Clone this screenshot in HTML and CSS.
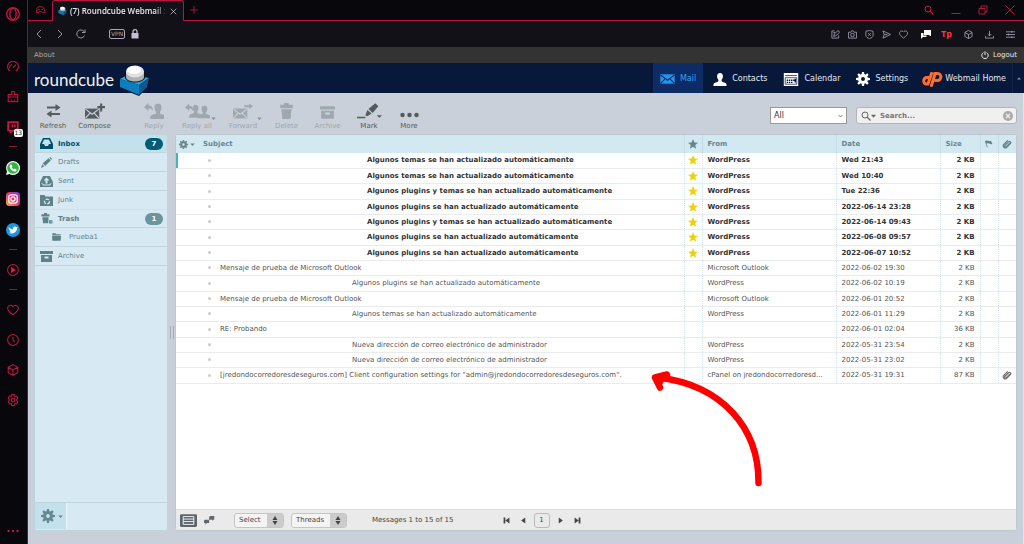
FILE: index.html
```
<!DOCTYPE html>
<html lang="en">
<head>
<meta charset="utf-8">
<title>Roundcube Webmail :: Inbox</title>
<link rel="stylesheet" href="styles.css">
</head>
<body>
<svg class="defs" aria-hidden="true">
  <symbol id="star" viewBox="0 0 20 20"><path fill="currentColor" d="M10 0l2.800 6.800 7.200.6-5.500 4.800 1.700 7.300L10 15.600l-6.200 3.900 1.700-7.300L0 7.400l7.200-.6z"/></symbol>
  <symbol id="gear" viewBox="0 0 20 20"><g fill="currentColor"><path fill-rule="evenodd" d="M10 3a7 7 0 1 0 0 14 7 7 0 0 0 0-14zm0 4.200a2.800 2.800 0 1 1 0 5.600 2.800 2.800 0 0 1 0-5.600z"/><path d="M8 4L8.500 0h3L12 4zM8 16l.5 4h3l.5-4zM4 8L0 8.500v3l4 .5zM16 8l4 .5v3l-4 .5zM4.300 7.200L1.900 4 4 1.900l3.200 2.400zM15.700 7.200L18.100 4 16 1.900l-3.200 2.400zM4.300 12.800L1.900 16 4 18.100l3.200-2.400zM15.700 12.800l2.400 3.200-2.100 2.100-3.200-2.400z"/></g></symbol>
  <symbol id="caret" viewBox="0 0 6 4"><path fill="currentColor" d="M0 .5h6L3 4z"/></symbol>
  <symbol id="clip" viewBox="0 0 20 20"><path fill="none" stroke="currentColor" stroke-width="2.400" stroke-linecap="round" d="M16 8l-7.500 7.500c-2 2-4.500-.5-2.800-2.500L13 5.500c2.500-2.500 6 1 3.700 3.500l-7.200 7.500C5.500 20.300-.2 15 3.500 11L11 3.300"/></symbol>
  <symbol id="person" viewBox="0 0 20 20"><path fill="currentColor" d="M10 0c3 0 4.500 2 4.500 5 0 2.500-.8 4-2 5.500v2c1 1.500 7.500 2 7.500 5V20H0v-2.500c0-3 6.500-3.500 7.500-5v-2c-1.200-1.500-2-3-2-5.500 0-3 1.500-5 4.500-5z"/></symbol>
  <symbol id="archive" viewBox="0 0 26 22"><path fill="currentColor" fill-rule="evenodd" d="M0 0h26v6H0zM2 8h22v14H2zm7 3v4h8v-4z"/></symbol>
  <symbol id="envelope" viewBox="0 0 24 16"><rect width="24" height="16" fill="currentColor"/><path fill="none" stroke-width="1.800" d="M1 1.500l11 8.500 11-8.500M1 15l7.500-7.500M23 15l-7.500-7.500"/></symbol>
  <symbol id="cube" viewBox="0 0 20 20"><path d="M10 1l8 4.500v9L10 19l-8-4.500v-9zM2 5.500l8 4.500 8-4.500M10 10v9"/></symbol>
  <symbol id="heart" viewBox="0 0 20 20"><path d="M10 18C5 14 1 11 1 7c0-5 6-6.500 9-2.500C13 .5 19 2 19 7c0 4-4 7-9 11z"/></symbol>
  <symbol id="lens" viewBox="0 0 20 20"><circle cx="8" cy="8" r="6" fill="none" stroke="currentColor" stroke-width="2"/><path d="M12.500 12.500L19 19" stroke="currentColor" stroke-width="2.500"/></symbol>
  <symbol id="logo" viewBox="0 0 31 31"><path fill="#101418" d="M0 13l9-5 22 4-2 10-9 9L0 23z"/><path fill="#2fa4dc" d="M1 14l9-5 20 4-10 7z"/><path fill="#0b7fc0" d="M1 14l19 6v10L1 22z"/><path fill="#075a92" d="M20 20l10-7-2 9-8 8z"/><path fill="#101418" d="M6 6h20v7c-3 6-17 6-20 0z"/><path fill="#aeb2b4" d="M7 6h18v6c0 6-18 6-18 0z"/><ellipse cx="16" cy="6.500" rx="9" ry="6" fill="#dfe1e2"/><ellipse cx="15" cy="5" rx="7" ry="4" fill="#fff"/></symbol>
</svg>

<div class="browser">
  <aside class="dock">
    <button class="dock-item opera" aria-label="Opera menu"><svg viewBox="0 0 20 20"><circle cx="10" cy="10" r="9"/><ellipse cx="10" cy="10" rx="4.500" ry="8"/></svg></button>
    <button class="dock-item" aria-label="GX Control"><svg viewBox="0 0 20 20"><path d="M5 17a9 9 0 1 1 10 0M10 11l5-5M4 12a6 6 0 0 1 4-6"/></svg></button>
    <button class="dock-item" aria-label="GX Cleaner"><svg viewBox="0 0 20 20"><path d="M2 10h16v8H2zM2 10V6h6V1h4v5h6v4M8 14v4M12 14v4"/></svg></button>
    <button class="dock-item twitch" aria-label="Twitch"><svg viewBox="0 0 20 20"><path stroke-width="3" d="M2 2h16v10l-4 4H9l-3 3v-3H2zM9 6v5M13 6v5"/></svg><span class="count">13</span></button>
    <span class="dash"></span>
    <button class="dock-item app" aria-label="WhatsApp"><svg viewBox="0 0 20 20"><path fill="#eee" stroke="none" d="M10 0a10 10 0 1 1-5 18.600L0 20l1.400-5A10 10 0 0 1 10 0z"/><circle cx="10" cy="10" r="8.300" fill="#2bb741" stroke="none"/><path fill="#fff" stroke="none" d="M6.500 5h1.500l1.200 2.800-1 1.200c.8 1.500 1.800 2.300 3.200 3l1.200-1.200 2.600 1.200c0 4-4 3.500-7 1.200C5.500 11 4 7 6.500 5z"/></svg></button>
    <button class="dock-item app" aria-label="Instagram"><svg viewBox="0 0 20 20"><defs><linearGradient id="insta" x1="0" y1="1" x2="1" y2="0"><stop offset="0" stop-color="#fdb541"/><stop offset=".5" stop-color="#e2316e"/><stop offset="1" stop-color="#6d42d4"/></linearGradient></defs><rect width="20" height="20" rx="5" fill="url(#insta)" stroke="none"/><g stroke="#fff" stroke-width="1.800"><rect x="4" y="4" width="12" height="12" rx="3"/><circle cx="10" cy="10" r="3"/></g></svg></button>
    <button class="dock-item app" aria-label="Twitter"><svg viewBox="0 0 20 20"><circle cx="10" cy="10" r="10" fill="#1d96e0" stroke="none"/><path fill="#fff" stroke="none" d="M4 6c2 2 4 3 6 3-.5-4 3-5 5-3l2-.7-1.300 2C16 13 10 17 4 14c2 0 3 0 4-1-2 0-2.500-1-3-2h1.500C4.500 10 4 9 4 8l1 .3C4 7.500 3.500 7 4 6z"/></svg></button>
    <span class="dash"></span>
    <button class="dock-item" aria-label="Player"><svg viewBox="0 0 20 20"><circle cx="10" cy="10" r="9"/><path fill="#fa1e4e" d="M7.500 6v8l6-4z"/></svg></button>
    <span class="dash"></span>
    <button class="dock-item" aria-label="Favourites"><svg><use href="#heart"/></svg></button>
    <button class="dock-item" aria-label="History"><svg viewBox="0 0 20 20"><circle cx="10" cy="10" r="9"/><path d="M10 5v5l3 3"/></svg></button>
    <button class="dock-item" aria-label="Extensions"><svg><use href="#cube"/></svg></button>
    <button class="dock-item" aria-label="Settings"><svg viewBox="0 0 20 20"><path d="M8 1h4l1 3 3-.5 2 3.500-2 3 2 3-2 3.500-3-.5-1 3H8l-1-3-3 .5L2 13l2-3-2-3 2-3.500L7 4z"/><circle cx="10" cy="10" r="3"/></svg></button>
    <button class="dock-item last" aria-label="More"><svg viewBox="0 0 20 20"><g fill="#c8173f" stroke="none"><circle cx="2.500" cy="10" r="1.900"/><circle cx="10" cy="10" r="1.900"/><circle cx="17.500" cy="10" r="1.900"/></g></svg></button>
  </aside>

  <div class="window">
    <header class="tabs">
      <button class="corner" aria-label="GX Corner"><svg viewBox="0 0 20 16"><path d="M5 1h10l4 6v7h-5l-2-3H8l-2 3H1V7zM4 7h4M12 7h4"/></svg></button>
      <div class="tab"><svg class="tab-logo"><use href="#logo"/></svg><span class="tab-title">(7) Roundcube Webmail :: I</span><button class="tab-close" aria-label="Close tab"><svg viewBox="0 0 10 10"><path d="M1 1l8 8M9 1L1 9"/></svg></button></div>
      <div class="tab-rest"><button class="new-tab" aria-label="New tab"><svg viewBox="0 0 10 10"><path d="M5 0v10M0 5h10"/></svg></button>
        <div class="win-controls">
          <button aria-label="Search tabs"><svg><use href="#lens"/></svg></button>
          <button aria-label="Minimize"><svg viewBox="0 0 20 20"><path d="M1 17h18"/></svg></button>
          <button aria-label="Restore"><svg viewBox="0 0 20 20"><path d="M2 7h12v11H2zM6 6V2h12v12h-4"/></svg></button>
          <button aria-label="Close"><svg viewBox="0 0 20 20"><path d="M1 1l18 18M19 1L1 19"/></svg></button>
        </div>
      </div>
    </header>

    <div class="address">
      <button aria-label="Back"><svg viewBox="0 0 20 20"><path d="M14 2l-8 8 8 8"/></svg></button>
      <button aria-label="Forward"><svg viewBox="0 0 20 20"><path d="M6 2l8 8-8 8"/></svg></button>
      <button aria-label="Reload"><svg viewBox="0 0 20 20"><path d="M17 13a8 8 0 1 1-1-8l2 2M18 1v6h-6"/></svg></button>
      <span class="vpn">VPN</span>
      <svg class="lock" viewBox="0 0 16 20"><path fill="#c6bfd6" d="M1 8h14v11H1z"/><path fill="none" stroke="#c6bfd6" stroke-width="2.500" d="M4 9V5c0-5 8-5 8 0v4"/></svg>
      <div class="address-tools">
        <button aria-label="Edit"><svg viewBox="0 0 20 20"><path d="M8 2H2v16h15v-6M6 14l2-6 8-7 3 4-8 8zM5 6h4"/></svg></button>
        <button aria-label="Snapshot"><svg viewBox="0 0 20 20"><path d="M1 5h5l2-3h4l2 3h5v13H1z"/><circle cx="10" cy="11" r="4"/></svg></button>
        <button aria-label="Blocker"><svg viewBox="0 0 20 20"><path d="M10 1l8 2v9c0 4-4 6-8 7-4-1-8-3-8-7V3zM7 7l6 6M13 7l-6 6"/></svg></button>
        <button aria-label="Send"><svg viewBox="0 0 20 20"><path d="M2 2l17 8-17 8 3-8zM5 10h7"/></svg></button>
        <button aria-label="Bookmark"><svg><use href="#heart"/></svg></button>
        <button class="chat" aria-label="Chat"><svg viewBox="0 0 20 20"><path fill="#fff" stroke="none" d="M6 2h14v12h-3v-2H6zM0 8h5v5h6v3H4l-3 3H0z"/></svg></button>
        <button class="tp" aria-label="Tp extension">Tp</button>
        <button aria-label="Extensions"><svg><use href="#cube"/></svg></button>
        <button aria-label="Downloads"><svg viewBox="0 0 20 20"><path d="M10 2v11M6 9l4 4 4-4M1 13v5h18v-5"/></svg></button>
        <button aria-label="Easy setup"><svg viewBox="0 0 20 20"><path d="M0 4h20M0 10h20M0 16h20M13 2v4M6 8v4M13 14v4"/></svg></button>
      </div>
    </div>

    <div class="topline"><a href="#">About</a><a class="logout" href="#"><svg viewBox="0 0 20 20"><path d="M6 4a8 8 0 1 0 8 0M10 1v9"/></svg>Logout</a></div>

    <header class="masthead">
      <a class="brand" href="#" aria-label="Roundcube"><span>roundcube</span><svg><use href="#logo"/></svg></a>
      <nav class="tasks">
        <a class="active" href="#"><svg class="mail-ic"><use href="#envelope"/></svg>Mail</a>
        <a href="#"><svg><use href="#person"/></svg>Contacts</a>
        <a href="#"><svg class="cal-ic" viewBox="0 0 20 18"><path fill="#fff" d="M0 0h20v18H0z"/><path fill="none" stroke="#07183a" d="M2 3.500h16M2 6.500h16v9H2z"/><path fill="#07183a" d="M4 9h2v2H4zM7 9h2v2H7zM10 9h2v2h-2zM13 9h2v2h-2zM4 12h2v2H4zM7 12h2v2H7zM10 12h2v2h-2zM15 8h2v5h-2z"/></svg>Calendar</a>
        <a href="#"><svg class="set-ic"><use href="#gear"/></svg>Settings</a>
        <a class="home" href="#"><svg class="cp-ic" viewBox="0 0 42 30"><path fill="none" stroke="#ff6c2c" stroke-width="6" stroke-linecap="round" stroke-linejoin="round" d="M15 11h-5c-8 0-9 13-1 13h3l7-21M25 3h6c10 0 8 14 0 14h-4M25 7l-6 20"/></svg>Webmail Home</a>
      </nav>
      <button class="fold" aria-label="Collapse header"><svg><use href="#caret"/></svg></button>
    </header>

    <main class="mail">
      <div class="toolbar">
        <button class="tool"><svg viewBox="0 0 30 28"><path fill="currentColor" d="M2 5h17V0l10 7-10 7V9H2zM28 18H11v-5L1 20l10 7v-5h17z"/></svg><span>Refresh</span></button>
        <button class="tool compose"><svg viewBox="0 0 42 32"><path fill="currentColor" d="M0 11h30v21H0z"/><path fill="none" stroke="#c9d0d9" stroke-width="2.500" d="M1 12l14 11 14-11M1 31l10-11M29 31L19 20"/><path stroke="currentColor" stroke-width="4.500" d="M34 0v17M26 8h16"/></svg><span>Compose</span></button>
        <button class="tool off reply" disabled><svg viewBox="0 0 40 32"><path fill="currentColor" d="M0 8l9-8v5c7 0 9 4 8 12-1-5-3-6-8-6v5z"/><use href="#person" x="10" y="1" width="36" height="31"/></svg><span>Reply</span></button>
        <button class="tool off split" disabled><svg class="wide" viewBox="0 0 54 32"><path fill="currentColor" d="M0 8l9-8v5c7 0 9 4 8 12-1-5-3-6-8-6v5z"/><use href="#person" x="9" y="1" width="28" height="31"/><use href="#person" x="28" y="4" width="28" height="28"/></svg><span>Reply all</span><svg class="car"><use href="#caret"/></svg></button>
        <button class="tool off split" disabled><svg class="fwd" viewBox="0 0 42 32"><path fill="currentColor" d="M0 11h30v21H0zM24 4h10V0l8 6-8 6V8H24z"/><path fill="none" stroke="#c9d0d9" stroke-width="2.500" d="M1 12l14 11 14-11M1 31l10-11M29 31L19 20"/></svg><span>Forward</span><svg class="car"><use href="#caret"/></svg></button>
        <button class="tool off" disabled><svg viewBox="0 0 24 28"><path fill="currentColor" d="M1 3h7V0h8v3h7v6H1zM3 11h18l-2 17H5z"/></svg><span>Delete</span></button>
        <button class="tool off" disabled><svg class="box"><use href="#archive"/></svg><span>Archive</span></button>
        <button class="tool mark"><svg class="wide" viewBox="0 0 48 30"><path fill="currentColor" d="M0 26h16v3H0zM16 23l4-10 8 7-8 5zM22 11L35 0l6 6-11 13zM38 23h10l-5 5z"/></svg><span>Mark</span></button>
        <button class="tool"><svg class="dots" viewBox="0 0 38 20"><g fill="currentColor"><circle cx="5" cy="18" r="4.500"/><circle cx="19" cy="18" r="4.500"/><circle cx="33" cy="18" r="4.500"/></g></svg><span>More</span></button>
        <div class="filters">
          <label class="filter"><select aria-label="Filter messages"><option>All</option></select><svg viewBox="0 0 10 6"><path fill="none" stroke="#555" stroke-width="1.500" d="M1 1l4 4 4-4"/></svg></label>
          <div class="search"><svg class="glass"><use href="#lens"/></svg><svg class="car"><use href="#caret"/></svg><input type="text" placeholder="Search..." aria-label="Search messages"><button aria-label="Clear search"><svg viewBox="0 0 20 20"><circle cx="10" cy="10" r="10" fill="#aaa"/><path stroke="#f0f0f0" stroke-width="2.500" d="M6 6l8 8M14 6l-8 8"/></svg></button></div>
        </div>
      </div>

      <div class="panes">
        <section class="folders">
          <nav>
            <a class="selected" href="#"><svg viewBox="0 0 26 22"><path fill="currentColor" fill-rule="evenodd" d="M6 0h14l6 12v10H0V12zM8 3L4 12h4l2 4h6l2-4h4l-4-9z"/></svg>Inbox<b>7</b></a>
            <a href="#"><svg viewBox="0 0 26 26"><path fill="currentColor" d="M0 26l3-9 5 5zM4 15L18 3l5 5L10 21zM20 1l2-1 4 4-2 3z"/></svg>Drafts</a>
            <a href="#"><svg viewBox="0 0 26 22"><path fill="currentColor" fill-rule="evenodd" d="M6 0h14l6 12v10H0V12zM13 3L7 9h4v6h4V9h4zM3 13v2l3 4h14l3-4v-2l-4 4H7z"/></svg>Sent</a>
            <a class="open" href="#"><svg viewBox="0 0 26 22"><path fill="currentColor" d="M0 0h9l2 3h15v19H0z"/><circle cx="14" cy="13" r="5" fill="none" stroke="#d7eaf3" stroke-width="2.500" stroke-dasharray="7 3"/></svg>Junk</a>
            <a class="unread" href="#"><svg viewBox="0 0 28 26"><path fill="currentColor" d="M2 3h6V0h7v3h6v5H2zM4 10h15l-1 14H6zM20 17h8v8h-8z"/><path stroke="#d7eaf3" d="M21 21h6"/></svg>Trash<b>1</b></a>
            <a class="child" href="#"><svg viewBox="0 0 26 22"><path fill="currentColor" d="M1 0h10v3h14v4H1zM0 8h26l-1 14H1z"/></svg>Prueba1</a>
            <a href="#"><svg><use href="#archive"/></svg>Archive</a>
          </nav>
          <footer><button aria-label="Folder actions"><svg class="cog"><use href="#gear"/></svg><svg class="car"><use href="#caret"/></svg></button></footer>
        </section>

        <div class="splitter"></div>

        <section class="messages">
          <div class="list">
            <table>
              <colgroup><col class="c-opt"><col><col class="c-star"><col class="c-from"><col class="c-date"><col class="c-size"><col class="c-flag"><col class="c-clip"></colgroup>
              <thead><tr><th><button class="options" aria-label="List options"><svg><use href="#gear"/></svg><svg class="car"><use href="#caret"/></svg></button></th><th class="subject-head">Subject</th><th><svg><use href="#star"/></svg></th><th>From</th><th>Date</th><th>Size</th><th><svg viewBox="0 0 24 24"><path fill="currentColor" d="M2 5c6-4 9 2 15-1l3 8c-4 2-6-1-9-1l-3-1-2 1 3 9H7z"/></svg></th><th><svg><use href="#clip"/></svg></th></tr></thead>
              <tbody>
                <tr class="new focus"><td></td><td class="in"><a href="#">Algunos temas se han actualizado automáticamente</a></td><td><svg><use href="#star"/></svg></td><td>WordPress</td><td>Wed 21:43</td><td>2 KB</td><td></td><td></td></tr>
                <tr class="new"><td></td><td class="in"><a href="#">Algunos temas se han actualizado automáticamente</a></td><td><svg><use href="#star"/></svg></td><td>WordPress</td><td>Wed 10:40</td><td>2 KB</td><td></td><td></td></tr>
                <tr class="new"><td></td><td class="in"><a href="#">Algunos plugins y temas se han actualizado automáticamente</a></td><td><svg><use href="#star"/></svg></td><td>WordPress</td><td>Tue 22:36</td><td>2 KB</td><td></td><td></td></tr>
                <tr class="new"><td></td><td class="in"><a href="#">Algunos plugins se han actualizado automáticamente</a></td><td><svg><use href="#star"/></svg></td><td>WordPress</td><td>2022-06-14 23:28</td><td>2 KB</td><td></td><td></td></tr>
                <tr class="new"><td></td><td class="in"><a href="#">Algunos plugins y temas se han actualizado automáticamente</a></td><td><svg><use href="#star"/></svg></td><td>WordPress</td><td>2022-06-14 09:43</td><td>2 KB</td><td></td><td></td></tr>
                <tr class="new"><td></td><td class="in"><a href="#">Algunos plugins se han actualizado automáticamente</a></td><td><svg><use href="#star"/></svg></td><td>WordPress</td><td>2022-06-08 09:57</td><td>2 KB</td><td></td><td></td></tr>
                <tr class="new"><td></td><td class="in"><a href="#">Algunos plugins se han actualizado automáticamente</a></td><td><svg><use href="#star"/></svg></td><td>WordPress</td><td>2022-06-07 10:52</td><td>2 KB</td><td></td><td></td></tr>
                <tr><td></td><td><a href="#">Mensaje de prueba de Microsoft Outlook</a></td><td></td><td>Microsoft Outlook</td><td>2022-06-02 19:30</td><td>2 KB</td><td></td><td></td></tr>
                <tr><td></td><td class="in"><a href="#">Algunos plugins se han actualizado automáticamente</a></td><td></td><td>WordPress</td><td>2022-06-02 10:19</td><td>2 KB</td><td></td><td></td></tr>
                <tr><td></td><td><a href="#">Mensaje de prueba de Microsoft Outlook</a></td><td></td><td>Microsoft Outlook</td><td>2022-06-01 20:52</td><td>2 KB</td><td></td><td></td></tr>
                <tr><td></td><td class="in"><a href="#">Algunos temas se han actualizado automáticamente</a></td><td></td><td>WordPress</td><td>2022-06-01 11:29</td><td>2 KB</td><td></td><td></td></tr>
                <tr><td></td><td><a href="#">RE: Probando</a></td><td></td><td></td><td>2022-06-01 02:04</td><td>36 KB</td><td></td><td></td></tr>
                <tr><td></td><td class="in"><a href="#">Nueva dirección de correo electrónico de administrador</a></td><td></td><td>WordPress</td><td>2022-05-31 23:54</td><td>2 KB</td><td></td><td></td></tr>
                <tr><td></td><td class="in"><a href="#">Nueva dirección de correo electrónico de administrador</a></td><td></td><td>WordPress</td><td>2022-05-31 23:02</td><td>2 KB</td><td></td><td></td></tr>
                <tr><td></td><td><a href="#">[jredondocorredoresdeseguros.com] Client configuration settings for "admin@jredondocorredoresdeseguros.com".</a></td><td></td><td>cPanel on jredondocorredoresd...</td><td>2022-05-31 19:31</td><td>87 KB</td><td></td><td><svg><use href="#clip"/></svg></td></tr>
              </tbody>
            </table>
            <svg class="pointer" viewBox="0 0 112 118"><path fill="none" stroke="#f00" stroke-width="6.500" stroke-linecap="round" stroke-linejoin="round" d="M107.500 112C108 58 72 14 7 6.500M16 3.500L4 6.500l5 10"/><path fill="#f00" d="M4 6l12-3-2 5-4 8z"/></svg>
          </div>
          <footer class="listfoot">
            <button class="view on" aria-label="List view"><svg viewBox="0 0 48 36"><rect width="48" height="36" rx="4" fill="#5c656b"/><path stroke="#fff" stroke-width="2.500" fill="none" d="M9 7h30v22H9zM9 14h30M9 21h30"/></svg></button>
            <button class="view" aria-label="Thread view"><svg viewBox="0 0 30 24"><path fill="#60686d" d="M16 0h12v10h-3l-2 4v-4h-9V3zM2 10h12v9H8l-4 5v-5H0v-7z"/></svg></button>
            <label class="menu"><select aria-label="Select messages"><option>Select</option></select><svg viewBox="0 0 15 13"><path d="M7.500 2L10 6H5zM7.500 11L10 7H5z"/></svg></label>
            <label class="menu threads"><select aria-label="Threads"><option>Threads</option></select><svg viewBox="0 0 15 13"><path d="M7.500 2L10 6H5zM7.500 11L10 7H5z"/></svg></label>
            <span class="range">Messages 1 to 15 of 15</span>
            <div class="pager">
              <button aria-label="First page"><svg viewBox="0 0 12 12"><path d="M1 1h3v10H1zM11 1v10L4 6z"/></svg></button>
              <button aria-label="Previous page"><svg viewBox="0 0 12 12"><path d="M9 1v10L2 6z"/></svg></button>
              <input type="text" value="1" aria-label="Page">
              <button aria-label="Next page"><svg viewBox="0 0 12 12"><path d="M3 1v10l7-5z"/></svg></button>
              <button aria-label="Last page"><svg viewBox="0 0 12 12"><path d="M8 1h3v10H8zM1 1v10l7-5z"/></svg></button>
            </div>
          </footer>
        </section>
      </div>
    </main>
  </div>
</div>
</body>
</html>
```
FILE: styles.css
```
* { box-sizing: border-box; }
body { margin: 0; font: 7px/12px "DejaVu Sans", Verdana, sans-serif; color: #555; background: #c9d0d9; }
button, input, select { font: inherit; color: inherit; margin: 0; padding: 0; border: 0; background: none; }
a { color: inherit; text-decoration: none; }
svg { display: block; flex: none; }
.defs { position: absolute; width: 0; height: 0; }
.browser { display: flex; min-height: 100vh; }

/* Browser side dock */
.dock { width: 28px; flex: none; background: #07070c; border-right: 1px solid #7c1334; display: flex; flex-direction: column; align-items: center; padding: 7px 2px 7px 0; gap: 18px; }
.dock-item { width: 12px; height: 12px; color: #c8173f; position: relative; }
.dock-item svg { width: 100%; height: 100%; fill: none; stroke: #c8173f; stroke-width: 1.700; }
.dock .opera { width: 14px; height: 14px; margin-bottom: 22px; }
.dock .opera svg { stroke-width: 2; }
.dock .app { width: 14px; height: 14px; margin: -1px 0; }
.dock .app + .app { margin-top: 0; }
.count { position: absolute; left: 7px; top: 8px; background: #fff; color: #222; border-radius: 2px; font: 6px/8px "DejaVu Sans", sans-serif; padding: 0 1px; }
.dash { width: 8px; height: 1px; margin: -5px 0; background: #8d1736; }
.dash + .app { margin-top: 1px; }
.dash + .dock-item:not(.app) { margin-top: 1px; }
.dock .last { margin-top: auto; }

/* Browser chrome */
.window { flex: 1; min-width: 0; display: flex; flex-direction: column; }
.tabs { height: 21px; background: #08080c; display: flex; font: 8px/20px "Open Sans", sans-serif; color: #e8e6ee; }
.tabs svg { fill: none; stroke: #c8173f; color: #c8173f; }
.corner { width: 24px; border-bottom: 1px solid #b8163c; display: grid; place-items: center; }
.corner svg { width: 9px; height: 8px; stroke-width: 2; }
.tab { width: 132px; display: flex; align-items: center; gap: 3px; padding: 0 6px 0 5px; border: 1px solid #b8163c; border-bottom: 0; border-radius: 3px 3px 0 0; background: #121118; }
.tab .tab-logo { width: 9px; height: 10px; stroke: none; }
.tab-title { flex: 1; min-width: 0; font-weight: 600; white-space: nowrap; mask-image: linear-gradient(to right, #000 88%, transparent); }
.tab-close svg { width: 7px; height: 7px; stroke: #d8d4e0; }
.tab-rest { flex: 1; display: flex; justify-content: space-between; align-items: center; border-bottom: 1px solid #b8163c; padding: 0 9px 0 6px; }
.new-tab svg { width: 8px; height: 8px; }
.win-controls { display: flex; gap: 17px; }
.win-controls svg { width: 10px; height: 10px; stroke-width: 1.800; }
.address { height: 26px; background: #121118; display: flex; align-items: center; gap: 11px; padding: 0 9px 0 6px; }
.address svg { width: 10px; height: 10px; fill: none; stroke: #aaa5b8; stroke-width: 1.800; }
.address > button { width: 10px; }
.vpn { margin-left: 12px; border: 1px solid #aaa5b8; border-radius: 2px; color: #aaa5b8; font: 6px/8px "DejaVu Sans", sans-serif; padding: 0 1px; }
.address .lock { width: 8px; height: 10px; margin-left: -5px; stroke: none; }
.address-tools { margin-left: auto; display: flex; gap: 8px; align-items: center; }
.address-tools svg { width: 9px; height: 9px; }
.address-tools .chat { margin-left: 5px; margin-right: 2px; }
.address-tools button:nth-child(n+8) { margin-left: 4px; }
.address-tools .chat svg { width: 10px; height: 10px; }
.tp { color: #fb3546; font: bold 9px/10px "Open Sans", sans-serif; }

/* Roundcube header */
.topline { height: 16px; background: #333; color: #aaa; display: flex; justify-content: space-between; align-items: center; padding: 0 7px 0 6px; }
.logout { display: flex; align-items: center; gap: 4px; color: #e8e8e8; }
.logout svg { width: 8px; height: 8px; fill: none; stroke: currentColor; stroke-width: 2.500; }
.masthead { height: 30px; background: #07183a; display: flex; align-items: stretch; }
.brand { display: flex; align-items: center; margin-right: auto; padding-left: 6px; gap: 5px; color: #f2f2f2; font: 17px/20px "Lato", sans-serif; }
.brand span { padding-top: 4px; }
.brand svg { width: 31px; height: 31px; margin-top: 4px; z-index: 1; }
.tasks { display: flex; font-size: 8px; color: #e6e9ef; }
.tasks a { display: flex; align-items: center; gap: 5px; padding: 2px 8px 0; }
.tasks .active { background: #0d2c66; color: #2ea4f2; padding: 2px 7px 0; margin-right: 2px; }
.tasks svg { width: 14px; height: 13px; color: #fff; }
.tasks .mail-ic { width: 15px; height: 10px; color: #2196ee; stroke: #0d2c66; }
.tasks .cal-ic { width: 16px; }
.tasks .set-ic { height: 14px; }
.tasks .cp-ic { width: 21px; height: 15px; }
.tasks .home { gap: 2px; padding: 2px 6px 0; }
.fold { width: 12px; color: #8490a5; border-left: 1px solid #152443; display: grid; place-items: center; }
.fold svg { width: 4px; height: 3px; transform: rotate(180deg); }

/* Toolbar */
.mail { flex: 1; display: flex; flex-direction: column; background: #c9d0d9; padding: 0 6px 13px 6px; border-right: 1px solid #dfe5ea; }
.toolbar { height: 41px; display: flex; align-items: flex-start; padding-top: 10px; }
.tool { width: 38px; height: 28px; display: flex; flex-direction: column; align-items: center; justify-content: space-between; position: relative; color: #555b60; padding-bottom: 0; line-height: 10px; }
.tool > svg { width: 15px; height: 16px; }
.tool .wide { width: 25px; }
.tool .fwd { width: 20px; }
.tool .dots { width: 19px; }
.tool .box { height: 13px; margin-top: 3px; }
.tool.compose { width: 45px; }
.tool.compose svg { width: 20px; }
.tool.off { color: #9fa7af; width: 41px; }
.tool.reply { margin-left: 17px; width: 40px; }
.tool.reply svg { width: 20px; }
.tool.split { width: 46px; }
.tool.split .car { position: absolute; right: 4px; top: 14px; width: 5px; height: 3px; color: #858d95; }
.tool.mark { width: 42px; }
.filters { margin-left: auto; display: flex; gap: 9px; padding-top: 4px; }
.filter { width: 77px; height: 17px; border: 1px solid #999; background: #fff; color: #333; font-size: 8px; display: flex; align-items: center; padding-right: 3px; }
.filter select { appearance: none; flex: 1; padding-left: 3px; }
.filter svg { width: 5px; height: 4px; }
.search { width: 161px; height: 17px; border: 1px solid #b2b6ba; border-radius: 3px; background: #f0f0f0; display: flex; align-items: center; padding: 0 3px 0 4px; color: #666; }
.search input { flex: 1; min-width: 0; padding-left: 4px; font-weight: bold; }
.search input::placeholder { color: #777; opacity: 1; }
.search svg { width: 10px; height: 10px; }
.search .car { width: 5px; height: 4px; }

/* Panes */
.panes { flex: 1; display: flex; }
.folders { width: 134px; flex: none; background: #d7eaf3; border-radius: 3px; border: 1px solid #c1d3dc; display: flex; flex-direction: column; color: #5f8289; }
.folders nav { flex: 1; }
.folders nav a { height: 19px; display: flex; align-items: center; gap: 5px; padding: 0 4px 0 5px; border-bottom: 1px solid #bfd6de; }
.folders nav a.selected { height: 18px; background: #c3e1ed; color: #014e6b; font-weight: bold; }
.folders nav a.unread { height: 18px; font-weight: bold; }
.folders nav a.open { border-color: #cfe2ea; }
.folders nav a.child { padding-left: 17px; gap: 8px; }
.folders nav svg { width: 13px; height: 11px; }
.folders nav .child svg { width: 9px; height: 8px; }
.folders b { margin-left: auto; width: 18px; height: 12px; border-radius: 6px; background: #6a959d; color: #fff; text-align: center; line-height: 12px; }
.folders .selected b { background: #005d76; }
.folders footer { height: 28px; border-top: 1px solid #bfd6de; }
.folders footer button { width: 32px; height: 26px; background: #c3e1ed; border-right: 1px solid #e8f4f8; display: flex; align-items: center; gap: 3px; padding-left: 6px; color: #66898f; }
.folders .cog { width: 14px; height: 14px; }
.folders .car { width: 5px; height: 3px; }
.splitter { width: 4px; height: 13px; align-self: center; margin: 0 1px 0 2px; border: solid #a3abb4; border-width: 0 1px; }
.messages { flex: 1; min-width: 0; display: flex; flex-direction: column; background: #fff; border: 1px solid #bcc8d0; border-radius: 3px; overflow: hidden; }
.list { flex: 1; position: relative; }
table { width: 100%; border-collapse: collapse; table-layout: fixed; }
.c-opt { width: 44px; }
.c-star { width: 18px; }
.c-from { width: 134px; }
.c-date { width: 104px; }
.c-size { width: 40px; }
.c-flag { width: 18px; }
.c-clip { width: 18px; }
th { height: 18px; background: #d3e9f2; color: #64868f; text-align: left; padding: 0 5px; line-height: 12px; border-left: 1px solid #c2dbe4; }
th:nth-child(-n+2), td:nth-child(-n+2) { border-left: 0; }
th svg, td svg { width: 10px; height: 10px; }
th:nth-child(3), td:nth-child(3), th:nth-child(n+7), td:nth-child(n+7) { padding: 0 3px; }
th.subject-head { text-indent: -22px; }
.options { display: flex; align-items: center; gap: 2px; margin-left: -2px; }
.options svg { width: 9px; height: 9px; }
.options .car { width: 5px; height: 3px; }
td { height: 15px; padding: 0 5px; line-height: 12px; white-space: nowrap; border-left: 1px dotted #cfe2e9; border-bottom: 1px solid #e9ebed; color: #555; }
tr:nth-child(3n) td { height: 16px; }
td:nth-child(2) { padding-left: 0; }
td:first-child { padding: 0 9px 0 0; }
td:first-child::after { content: ""; display: block; width: 3px; height: 3px; border-radius: 2px; background: #ccc; margin-left: auto; }
td:nth-child(6) { text-align: right; }
td.in { padding-left: 132px; }
.new td { font-weight: bold; color: #333; }
.new td.in { padding-left: 147px; }
td.in + td svg { color: #ebd20f; }
.focus td:first-child { box-shadow: inset 2px 0 #45b0c9; }
td:last-child { color: #777; }
.pointer { position: absolute; left: 475px; top: 236px; width: 112px; height: 118px; }

/* List footer */
.listfoot { height: 21px; background: #eaeaea; border-top: 1px solid #ddd; display: flex; align-items: center; color: #444; padding-left: 4px; }
.view.on { margin-right: 7px; }
.view.on svg { width: 17px; height: 13px; }
.view svg { width: 11px; height: 9px; }
.menu { margin-left: 19px; width: 50px; height: 15px; border: 1px solid #c5c5c5; border-radius: 3px; background: #f4f4f4; display: flex; overflow: hidden; }
.menu select { appearance: none; flex: 1; min-width: 0; padding-left: 4px; }
.menu svg { width: 16px; height: 13px; background: #ccc; fill: #444; }
.menu.threads { margin-left: 7px; width: 56px; }
.range { margin-left: 25px; }
.pager { display: flex; align-items: center; gap: 10px; margin-left: 49px; }
.pager svg { width: 7px; height: 7px; fill: #444; }
.pager input { width: 16px; height: 15px; margin: 0 -3px; border: 1px solid #bbb; border-radius: 3px; text-align: center; }
```
